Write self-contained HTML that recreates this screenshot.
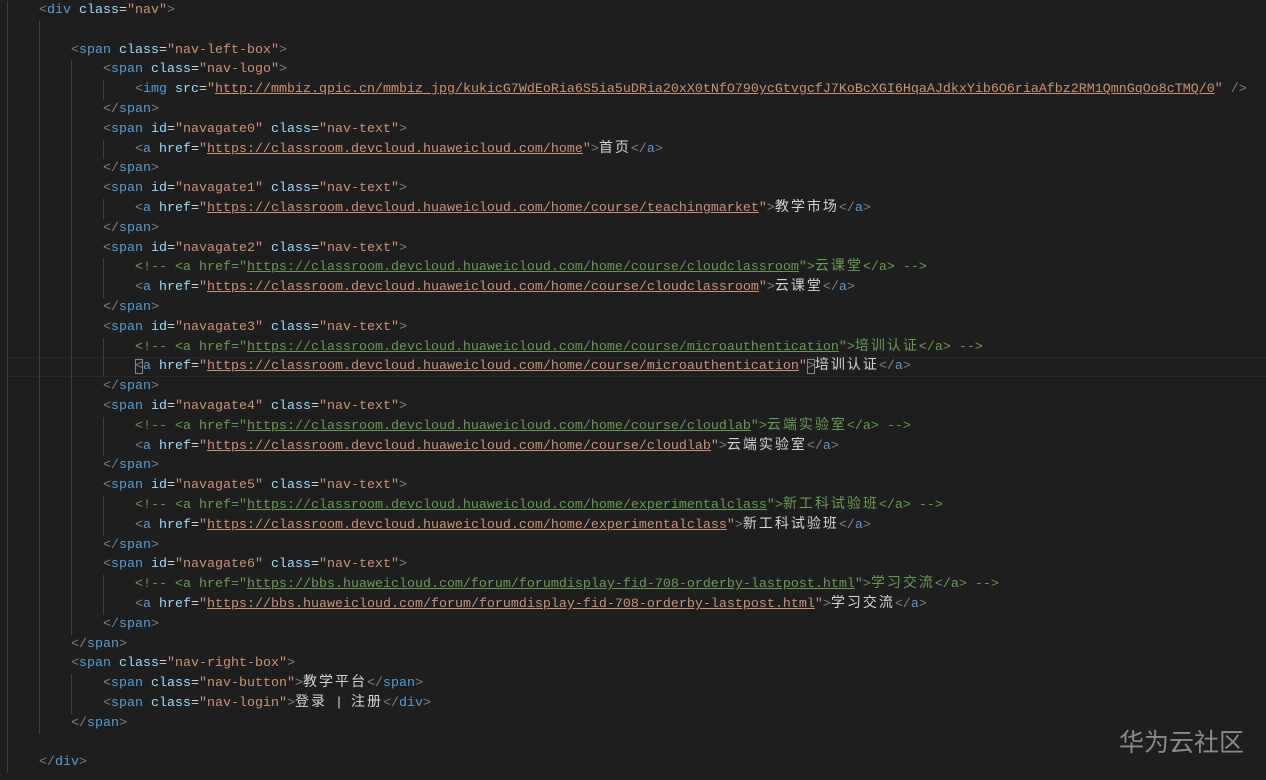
<!DOCTYPE html>
<html><head><meta charset="utf-8"><style>
html,body{margin:0;height:780px;overflow:hidden}
body{width:1266px;background:#1e1e1e;position:relative;font-family:"Liberation Mono","Noto Sans CJK SC",monospace;font-size:13.33px;color:#d4d4d4}
.l{position:absolute;left:7px;height:19.8px;line-height:19.8px;white-space:pre;overflow:hidden}
.g{display:inline-block;height:19.8px;vertical-align:top;background:repeating-linear-gradient(to right,#404040 0 1px,transparent 1px 32px)}
.t{color:#569cd6}.p{color:#808080}.a{color:#9cdcfe}.s{color:#ce9178}.u{color:#ce9178;text-decoration:underline}.c{color:#6a9955}.cu{color:#6a9955;text-decoration:underline}
.z{font-family:"Noto Sans CJK SC",sans-serif;font-size:14px;letter-spacing:2px;line-height:0}
.cur{position:absolute;left:7px;right:0;height:18px;border-top:1px solid #282828;border-bottom:1px solid #282828}
.wm{position:absolute;left:1119px;top:723px;font-family:"Noto Sans CJK SC",sans-serif;font-size:25px;color:#8a8a8a}
</style></head><body>
<div class="cur" style="top:356.6px"></div>
<div class="l" style="top:1px"><span class="g" style="width:32px"></span><span class="p">&lt;</span><span class="t">div</span> <span class="a">class</span>=<span class="s">"nav"</span><span class="p">&gt;</span></div>
<div class="l" style="top:20.8px"><span class="g" style="width:64px"></span></div>
<div class="l" style="top:40.6px"><span class="g" style="width:64px"></span><span class="p">&lt;</span><span class="t">span</span> <span class="a">class</span>=<span class="s">"nav-left-box"</span><span class="p">&gt;</span></div>
<div class="l" style="top:60.4px"><span class="g" style="width:96px"></span><span class="p">&lt;</span><span class="t">span</span> <span class="a">class</span>=<span class="s">"nav-logo"</span><span class="p">&gt;</span></div>
<div class="l" style="top:80.2px"><span class="g" style="width:128px"></span><span class="p">&lt;</span><span class="t">img</span> <span class="a">src</span>=<span class="s">"</span><span class="u">http://mmbiz.qpic.cn/mmbiz_jpg/kukicG7WdEoRia6S5ia5uDRia20xX0tNfO790ycGtvgcfJ7KoBcXGI6HqaAJdkxYib6O6riaAfbz2RM1QmnGqOo8cTMQ/0</span><span class="s">"</span> <span class="p">/&gt;</span></div>
<div class="l" style="top:100px"><span class="g" style="width:96px"></span><span class="p">&lt;/</span><span class="t">span</span><span class="p">&gt;</span></div>
<div class="l" style="top:119.8px"><span class="g" style="width:96px"></span><span class="p">&lt;</span><span class="t">span</span> <span class="a">id</span>=<span class="s">"navagate0"</span> <span class="a">class</span>=<span class="s">"nav-text"</span><span class="p">&gt;</span></div>
<div class="l" style="top:139.6px"><span class="g" style="width:128px"></span><span class="p">&lt;</span><span class="t">a</span> <span class="a">href</span>=<span class="s">"</span><span class="u">https://classroom.devcloud.huaweicloud.com/home</span><span class="s">"</span><span class="p">&gt;</span><span class="z">首页</span><span class="p">&lt;/</span><span class="t">a</span><span class="p">&gt;</span></div>
<div class="l" style="top:159.4px"><span class="g" style="width:96px"></span><span class="p">&lt;/</span><span class="t">span</span><span class="p">&gt;</span></div>
<div class="l" style="top:179.2px"><span class="g" style="width:96px"></span><span class="p">&lt;</span><span class="t">span</span> <span class="a">id</span>=<span class="s">"navagate1"</span> <span class="a">class</span>=<span class="s">"nav-text"</span><span class="p">&gt;</span></div>
<div class="l" style="top:199px"><span class="g" style="width:128px"></span><span class="p">&lt;</span><span class="t">a</span> <span class="a">href</span>=<span class="s">"</span><span class="u">https://classroom.devcloud.huaweicloud.com/home/course/teachingmarket</span><span class="s">"</span><span class="p">&gt;</span><span class="z">教学市场</span><span class="p">&lt;/</span><span class="t">a</span><span class="p">&gt;</span></div>
<div class="l" style="top:218.8px"><span class="g" style="width:96px"></span><span class="p">&lt;/</span><span class="t">span</span><span class="p">&gt;</span></div>
<div class="l" style="top:238.6px"><span class="g" style="width:96px"></span><span class="p">&lt;</span><span class="t">span</span> <span class="a">id</span>=<span class="s">"navagate2"</span> <span class="a">class</span>=<span class="s">"nav-text"</span><span class="p">&gt;</span></div>
<div class="l" style="top:258.4px"><span class="g" style="width:128px"></span><span class="c">&lt;!-- &lt;a href="</span><span class="cu">https://classroom.devcloud.huaweicloud.com/home/course/cloudclassroom</span><span class="c">"&gt;<span class="z">云课堂</span>&lt;/a&gt; --&gt;</span></div>
<div class="l" style="top:278.2px"><span class="g" style="width:128px"></span><span class="p">&lt;</span><span class="t">a</span> <span class="a">href</span>=<span class="s">"</span><span class="u">https://classroom.devcloud.huaweicloud.com/home/course/cloudclassroom</span><span class="s">"</span><span class="p">&gt;</span><span class="z">云课堂</span><span class="p">&lt;/</span><span class="t">a</span><span class="p">&gt;</span></div>
<div class="l" style="top:298px"><span class="g" style="width:96px"></span><span class="p">&lt;/</span><span class="t">span</span><span class="p">&gt;</span></div>
<div class="l" style="top:317.8px"><span class="g" style="width:96px"></span><span class="p">&lt;</span><span class="t">span</span> <span class="a">id</span>=<span class="s">"navagate3"</span> <span class="a">class</span>=<span class="s">"nav-text"</span><span class="p">&gt;</span></div>
<div class="l" style="top:337.6px"><span class="g" style="width:128px"></span><span class="c">&lt;!-- &lt;a href="</span><span class="cu">https://classroom.devcloud.huaweicloud.com/home/course/microauthentication</span><span class="c">"&gt;<span class="z">培训认证</span>&lt;/a&gt; --&gt;</span></div>
<div class="l" style="top:357.4px"><span class="g" style="width:128px"></span><span class="p" style="outline:1px solid #888;outline-offset:-1px">&lt;</span><span class="t">a</span> <span class="a">href</span>=<span class="s">"</span><span class="u">https://classroom.devcloud.huaweicloud.com/home/course/microauthentication</span><span class="s">"</span><span class="p" style="outline:1px solid #888;outline-offset:-1px">&gt;</span><span class="z">培训认证</span><span class="p">&lt;/</span><span class="t">a</span><span class="p">&gt;</span></div>
<div class="l" style="top:377.2px"><span class="g" style="width:96px"></span><span class="p">&lt;/</span><span class="t">span</span><span class="p">&gt;</span></div>
<div class="l" style="top:397px"><span class="g" style="width:96px"></span><span class="p">&lt;</span><span class="t">span</span> <span class="a">id</span>=<span class="s">"navagate4"</span> <span class="a">class</span>=<span class="s">"nav-text"</span><span class="p">&gt;</span></div>
<div class="l" style="top:416.8px"><span class="g" style="width:128px"></span><span class="c">&lt;!-- &lt;a href="</span><span class="cu">https://classroom.devcloud.huaweicloud.com/home/course/cloudlab</span><span class="c">"&gt;<span class="z">云端实验室</span>&lt;/a&gt; --&gt;</span></div>
<div class="l" style="top:436.6px"><span class="g" style="width:128px"></span><span class="p">&lt;</span><span class="t">a</span> <span class="a">href</span>=<span class="s">"</span><span class="u">https://classroom.devcloud.huaweicloud.com/home/course/cloudlab</span><span class="s">"</span><span class="p">&gt;</span><span class="z">云端实验室</span><span class="p">&lt;/</span><span class="t">a</span><span class="p">&gt;</span></div>
<div class="l" style="top:456.4px"><span class="g" style="width:96px"></span><span class="p">&lt;/</span><span class="t">span</span><span class="p">&gt;</span></div>
<div class="l" style="top:476.2px"><span class="g" style="width:96px"></span><span class="p">&lt;</span><span class="t">span</span> <span class="a">id</span>=<span class="s">"navagate5"</span> <span class="a">class</span>=<span class="s">"nav-text"</span><span class="p">&gt;</span></div>
<div class="l" style="top:496px"><span class="g" style="width:128px"></span><span class="c">&lt;!-- &lt;a href="</span><span class="cu">https://classroom.devcloud.huaweicloud.com/home/experimentalclass</span><span class="c">"&gt;<span class="z">新工科试验班</span>&lt;/a&gt; --&gt;</span></div>
<div class="l" style="top:515.8px"><span class="g" style="width:128px"></span><span class="p">&lt;</span><span class="t">a</span> <span class="a">href</span>=<span class="s">"</span><span class="u">https://classroom.devcloud.huaweicloud.com/home/experimentalclass</span><span class="s">"</span><span class="p">&gt;</span><span class="z">新工科试验班</span><span class="p">&lt;/</span><span class="t">a</span><span class="p">&gt;</span></div>
<div class="l" style="top:535.6px"><span class="g" style="width:96px"></span><span class="p">&lt;/</span><span class="t">span</span><span class="p">&gt;</span></div>
<div class="l" style="top:555.4px"><span class="g" style="width:96px"></span><span class="p">&lt;</span><span class="t">span</span> <span class="a">id</span>=<span class="s">"navagate6"</span> <span class="a">class</span>=<span class="s">"nav-text"</span><span class="p">&gt;</span></div>
<div class="l" style="top:575.2px"><span class="g" style="width:128px"></span><span class="c">&lt;!-- &lt;a href="</span><span class="cu">https://bbs.huaweicloud.com/forum/forumdisplay-fid-708-orderby-lastpost.html</span><span class="c">"&gt;<span class="z">学习交流</span>&lt;/a&gt; --&gt;</span></div>
<div class="l" style="top:595px"><span class="g" style="width:128px"></span><span class="p">&lt;</span><span class="t">a</span> <span class="a">href</span>=<span class="s">"</span><span class="u">https://bbs.huaweicloud.com/forum/forumdisplay-fid-708-orderby-lastpost.html</span><span class="s">"</span><span class="p">&gt;</span><span class="z">学习交流</span><span class="p">&lt;/</span><span class="t">a</span><span class="p">&gt;</span></div>
<div class="l" style="top:614.8px"><span class="g" style="width:96px"></span><span class="p">&lt;/</span><span class="t">span</span><span class="p">&gt;</span></div>
<div class="l" style="top:634.6px"><span class="g" style="width:64px"></span><span class="p">&lt;/</span><span class="t">span</span><span class="p">&gt;</span></div>
<div class="l" style="top:654.4px"><span class="g" style="width:64px"></span><span class="p">&lt;</span><span class="t">span</span> <span class="a">class</span>=<span class="s">"nav-right-box"</span><span class="p">&gt;</span></div>
<div class="l" style="top:674.2px"><span class="g" style="width:96px"></span><span class="p">&lt;</span><span class="t">span</span> <span class="a">class</span>=<span class="s">"nav-button"</span><span class="p">&gt;</span><span class="z">教学平台</span><span class="p">&lt;/</span><span class="t">span</span><span class="p">&gt;</span></div>
<div class="l" style="top:694px"><span class="g" style="width:96px"></span><span class="p">&lt;</span><span class="t">span</span> <span class="a">class</span>=<span class="s">"nav-login"</span><span class="p">&gt;</span><span class="z">登录</span> | <span class="z">注册</span><span class="p">&lt;/</span><span class="t">div</span><span class="p">&gt;</span></div>
<div class="l" style="top:713.8px"><span class="g" style="width:64px"></span><span class="p">&lt;/</span><span class="t">span</span><span class="p">&gt;</span></div>
<div class="l" style="top:733.6px"><span class="g" style="width:32px"></span></div>
<div class="l" style="top:753.4px"><span class="g" style="width:32px"></span><span class="p">&lt;/</span><span class="t">div</span><span class="p">&gt;</span></div>
<div class="wm">华为云社区</div>
</body></html>
